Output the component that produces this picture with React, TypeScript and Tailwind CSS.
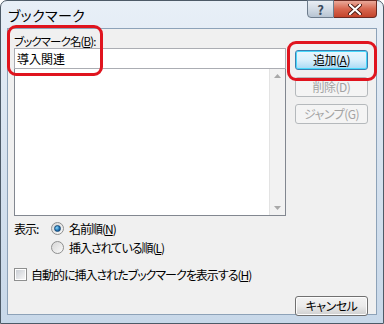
import React from 'react';

const font = { fontFamily: '"Noto Sans CJK JP", "Noto Sans", sans-serif' };

function Btn({ label, disabled, focused }: { label: React.ReactNode; disabled?: boolean; focused?: boolean }) {
  return (
    <div
      className={`w-[73px] h-[20px] rounded-[3px] border flex items-center justify-center text-[12px] leading-none tracking-[-0.5px] [font-feature-settings:'palt'] ${
        disabled
          ? 'border-[#b5b9bc] bg-[#f4f4f4] text-[#a3a3a3]'
          : focused
          ? 'border-[#3c7fb1] bg-gradient-to-b from-[#eaf6fd] via-[#d9f0fc] to-[#a7d9f5] text-black shadow-[inset_0_0_0_1px_#48d8fb]'
          : 'border-[#707070] bg-gradient-to-b from-[#f2f2f2] via-[#ebebeb] to-[#cfcfcf] text-black shadow-[inset_0_0_0_1px_#fcfcfc]'
      }`}
    >
      {label}
    </div>
  );
}

function Radio({ checked }: { checked?: boolean }) {
  return (
    <div className="w-[13px] h-[13px] rounded-full border border-[#8e8f8f] bg-gradient-to-br from-[#d6d6d6] to-[#fafafa] flex items-center justify-center shrink-0">
      {checked && (
        <div className="w-[7px] h-[7px] rounded-full bg-[radial-gradient(circle_at_35%_35%,#8ad8fb,#1b6eb0_60%,#0b3d6e)] border border-[#174a78]" />
      )}
    </div>
  );
}

export default function App() {
  return (
    <div style={font} className="w-[384px] h-[324px] relative overflow-hidden">
      <div className="w-full h-full rounded-t-[7px] border border-[#4d5a67] bg-gradient-to-b from-[#e8eff7] via-[#d6e2ef] to-[#c8d8e9] flex flex-col">
        {/* title bar */}
        <div className="h-[27px] flex items-start justify-between shrink-0">
          <div className="pl-[7px] pt-[5px] text-[14px] leading-[18px] text-black tracking-[0.4px] [font-feature-settings:'palt']">ブックマーク</div>
          <div className="flex mr-[6px] -mt-px">
            <div className="w-[27px] h-[18px] rounded-bl-[4px] border border-[#6d7c8c] bg-gradient-to-b from-[#e9eef4] via-[#d2dbe5] to-[#b7c4d2] flex items-center justify-center text-[13px] leading-none text-[#3a4a5c] font-bold">
              ?
            </div>
            <div className="w-[43px] h-[18px] rounded-br-[4px] border border-l-0 border-[#6b2a22] bg-gradient-to-b from-[#e9a99a] via-[#d7664f] to-[#c3432b] flex items-center justify-center">
              <svg width="14" height="11" viewBox="0 0 14 11">
                <path d="M2 1 L12 10 M12 1 L2 10" stroke="#4a1a12" strokeWidth="4" strokeLinecap="round" />
                <path d="M2 1 L12 10 M12 1 L2 10" stroke="#ffffff" strokeWidth="2.2" strokeLinecap="round" />
              </svg>
            </div>
          </div>
        </div>

        {/* client area */}
        <div className="mx-[6px] h-[287px] border border-[#8da2b8] bg-[#f0f0f0] flex flex-col pl-[6px] text-[12px] text-black tracking-[-1px] [font-feature-settings:'palt']">
          <div className="flex">
            <div className="w-[272px] flex flex-col">
              <div className="mt-[6px] h-[13px] leading-[13px] text-[11.5px] tracking-[-0.9px]">
                ブックマーク名(<span className="underline">B</span>):
              </div>
              <div className="h-[21px] border border-[#abadb3] bg-white px-[2px] text-[12px] leading-[19px] tracking-[0px]">導入関連</div>
              <div className="h-[147px] border border-t-0 border-[#828790] bg-white flex justify-end">
                <div className="w-[16px] bg-[#f2f2f2] border-l border-[#e3e3e3] flex flex-col items-center justify-between py-[5px]">
                  <svg width="7" height="4" viewBox="0 0 7 4"><path d="M0 4 L3.5 0 L7 4 Z" fill="#a9a9a9" /></svg>
                  <svg width="7" height="4" viewBox="0 0 7 4"><path d="M0 0 L3.5 4 L7 0 Z" fill="#a9a9a9" /></svg>
                </div>
              </div>
            </div>
            <div className="ml-[9px] flex flex-col gap-[7px] pt-[21px]">
              <Btn focused label={<span>追加(<span className="underline">A</span>)</span>} />
              <Btn disabled label="削除(D)" />
              <Btn disabled label="ジャンプ(G)" />
            </div>
          </div>

          <div className="mt-[6px] flex">
            <div className="w-[37px] leading-[13px]">表示:</div>
            <div className="flex flex-col gap-[6px]">
              <div className="flex items-center gap-[5px] h-[13px]">
                <Radio checked />
                <span className="leading-[13px]">名前順(<span className="underline">N</span>)</span>
              </div>
              <div className="flex items-center gap-[5px] h-[13px]">
                <Radio />
                <span className="leading-[13px]">挿入されている順(<span className="underline">L</span>)</span>
              </div>
            </div>
          </div>

          <div className="mt-[14px] flex items-center gap-[4px] h-[13px]">
            <div className="w-[13px] h-[13px] border border-[#8e8f8f] bg-white p-[1px] shrink-0">
              <div className="w-full h-full bg-gradient-to-br from-[#cbcfd5] to-[#f6f6f6]" />
            </div>
            <span className="leading-[13px]">自動的に挿入されたブックマークを表示する(<span className="underline">H</span>)</span>
          </div>

          <div className="mt-[15px] flex justify-end pr-[8px]">
            <Btn label="キャンセル" />
          </div>
        </div>
      </div>

      {/* red annotation boxes */}
      <div className="absolute left-[7px] top-[25px] w-[96px] h-[51px] rounded-[9px] border-[3px] border-[#e0141e]" />
      <div className="absolute left-[287px] top-[41px] w-[90px] h-[40px] rounded-[9px] border-[3px] border-[#e0141e]" />
    </div>
  );
}
